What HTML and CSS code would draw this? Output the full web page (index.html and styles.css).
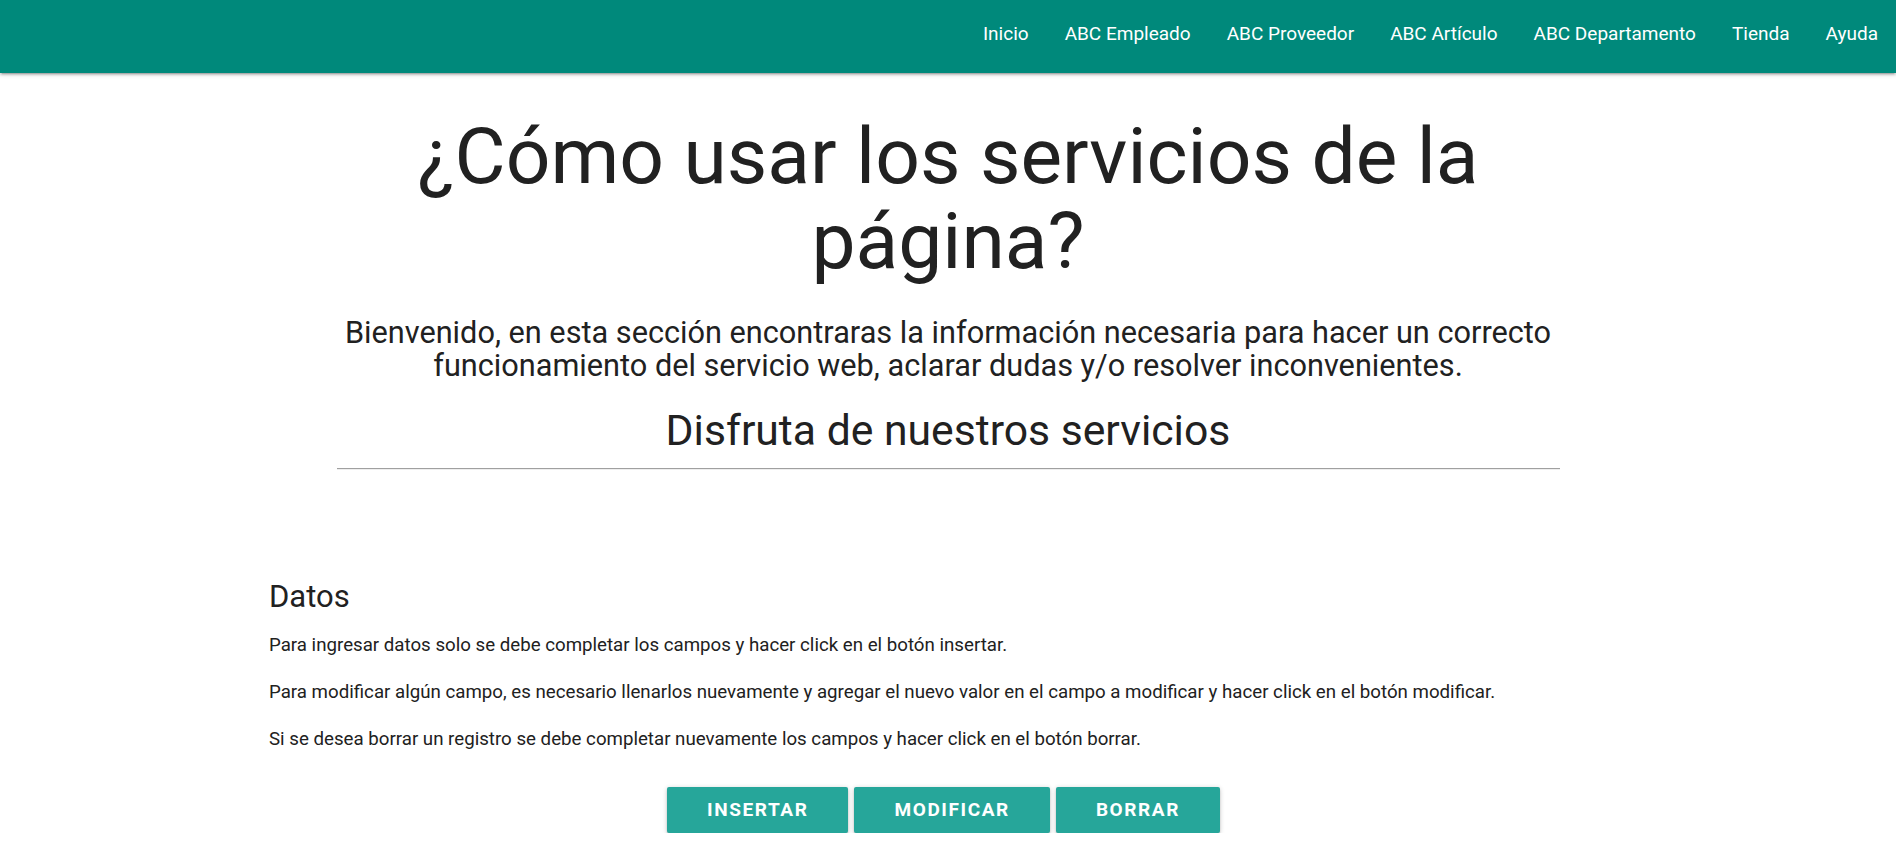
FILE: index.html
```html
<!DOCTYPE html>
<html lang="es">
<head>
<meta charset="utf-8">
<title>Ayuda</title>
<link rel="stylesheet" href="styles.css">
</head>
<body>
<nav class="topbar">
  <ul class="nav-links">
    <li><a href="#">Inicio</a></li>
    <li><a href="#">ABC Empleado</a></li>
    <li><a href="#">ABC Proveedor</a></li>
    <li><a href="#">ABC Artículo</a></li>
    <li><a href="#">ABC Departamento</a></li>
    <li><a href="#">Tienda</a></li>
    <li><a href="#">Ayuda</a></li>
  </ul>
</nav>
<main>
  <section class="intro">
    <h1 class="title">¿Cómo usar los servicios de la página?</h1>
    <h5 class="lead">Bienvenido, en esta sección encontraras la información necesaria para hacer un correcto funcionamiento del servicio web, aclarar dudas y/o resolver inconvenientes.</h5>
    <h4 class="subtitle">Disfruta de nuestros servicios</h4>
    <hr class="divider">
  </section>
  <section class="datos">
    <h5 class="section-title">Datos</h5>
    <p>Para ingresar datos solo se debe completar los campos y hacer click en el botón insertar.</p>
    <p>Para modificar algún campo, es necesario llenarlos nuevamente y agregar el nuevo valor en el campo a modificar y hacer click en el botón modificar.</p>
    <p>Si se desea borrar un registro se debe completar nuevamente los campos y hacer click en el botón borrar.</p>
    <div class="actions">
      <button class="btn btn-insert">Insertar</button>
      <button class="btn btn-modify">Modificar</button>
      <button class="btn btn-delete">Borrar</button>
    </div>
  </section>
</main>
</body>
</html>
```

FILE: styles.css
```css
* { box-sizing: border-box; }

html, body {
  margin: 0;
  padding: 0;
}

body {
  font-family: Roboto, "Liberation Sans", sans-serif;
  color: rgba(0, 0, 0, 0.87);
  background: #fff;
}

.topbar {
  height: 73px;
  background: #00897b;
  box-shadow: 0 2px 2px 0 rgba(0,0,0,0.14), 0 3px 1px -2px rgba(0,0,0,0.12), 0 1px 5px 0 rgba(0,0,0,0.2);
  display: flex;
  justify-content: flex-end;
}

.nav-links {
  list-style: none;
  margin: 0;
  padding: 0;
  display: flex;
}

.nav-links a {
  display: block;
  padding: 0 18px;
  line-height: 68px;
  font-size: 19px;
  color: #fff;
  text-decoration: none;
}

.intro {
  width: 1223px;
  margin: 0 auto;
  text-align: center;
}

.title {
  font-size: 78.5px;
  font-weight: 400;
  line-height: 85px;
  margin: 41px 0 0;
  color: #212121;
}

.lead {
  font-size: 30.7px;
  font-weight: 400;
  line-height: 32.5px;
  margin: 33px 0 0;
  color: #212121;
}

.subtitle {
  font-size: 42.7px;
  font-weight: 400;
  line-height: 46px;
  margin: 25px 0 0;
  color: #212121;
}

.divider {
  margin: 15px 0 0;
  border: 0;
  border-top: 1px solid #a0a0a0;
  border-bottom: 1px solid #eeeeee;
  height: 0;
}

.datos {
  width: 1358px;
  margin: 0 auto;
  padding-top: 111px;
}

.section-title {
  font-size: 31px;
  font-weight: 400;
  line-height: 32.5px;
  margin: 0 0 17px;
  color: #212121;
}

.datos p {
  font-size: 18.7px;
  line-height: 29px;
  margin: 0 0 18px;
  color: #212121;
}

.actions {
  display: flex;
  justify-content: center;
  gap: 6px;
  margin-top: 33px;
  padding-right: 9px;
}

.btn {
  height: 46px;
  padding: 0 40px;
  border: 0;
  border-radius: 2px;
  background: #26a69a;
  color: #fff;
  font-family: Roboto, "Liberation Sans", sans-serif;
  font-size: 19px;
  font-weight: 700;
  letter-spacing: 1.6px;
  text-transform: uppercase;
  box-shadow: 0 2px 2px 0 rgba(0,0,0,0.14), 0 3px 1px -2px rgba(0,0,0,0.12), 0 1px 5px 0 rgba(0,0,0,0.2);
  cursor: pointer;
}
```
